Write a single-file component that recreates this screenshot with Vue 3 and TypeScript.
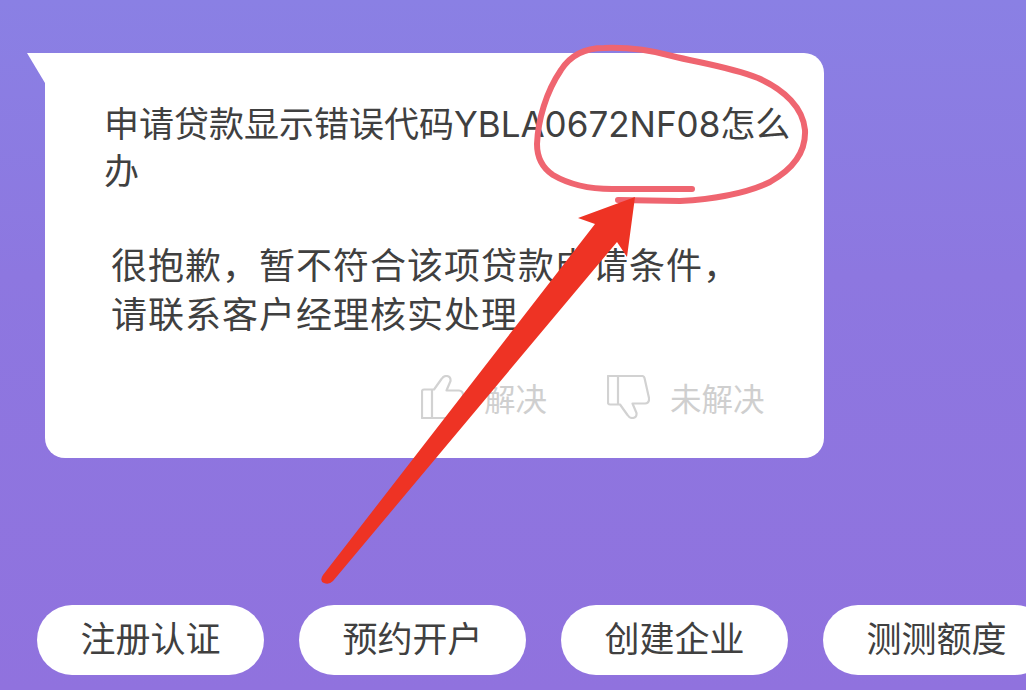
<script setup lang="ts">
const chips: string[] = ['注册认证', '预约开户', '创建企业', '测测额度']
const handPath = 'M1 1H35Q37 1 37.500 3L42 23Q42.500 28 38 28.500H25.500L29.500 38Q30 43 25 43Q22.500 43 20.500 40L13 29.500H3Q1 29.500 1 27.500ZM11 1V29.500'
</script>

<template>
  <div class="page">
    <section class="bubble">
      <p class="question">申请贷款显示错误代码YBLA0672NF08怎么办</p>
      <p class="answer">很抱歉，暂不符合该项贷款申请条件，<br />请联系客户经理核实处理</p>
      <div class="feedback">
        <div class="vote up">
          <svg class="hand" viewBox="0 0 43 44" width="43" height="44" aria-hidden="true">
            <path :d="handPath" transform="matrix(1 0 0 -1 0 44)" />
          </svg>
          <span>解决</span>
        </div>
        <div class="vote">
          <svg class="hand" viewBox="0 0 43 44" width="43" height="44" aria-hidden="true">
            <path :d="handPath" />
          </svg>
          <span>未解决</span>
        </div>
      </div>
    </section>

    <nav class="chips">
      <button v-for="chip in chips" :key="chip" class="chip" type="button">{{ chip }}</button>
    </nav>

    <svg class="markup" viewBox="0 0 1026 690" width="1026" height="690" aria-hidden="true">
      <path
        class="ring"
        d="M692 189L612 189C590 189 570 185 553 175C541 167 537 156 537 144C538 120 546 92 561 70C570 56 583 48 604 48C630 47 650 50 672 56C700 63 730 67 758 78C785 90 803 108 805 130C806 150 795 168 770 182C745 194 715 199 680 201L618 200"
      />
      <path
        class="arrow"
        d="M635 197L578 218L595 224L323 575Q319 581 324 583Q329 585 333 581L617 242L627 257Z"
      />
    </svg>
  </div>
</template>

<style>
html,
body {
  margin: 0;
  padding: 0;
}
</style>

<style scoped>
.page {
  position: relative;
  width: 1026px;
  height: 690px;
  box-sizing: border-box;
  padding-top: 53px;
  overflow: hidden;
  background: linear-gradient(180deg, #8a80e4 0%, #8d77e0 40%, #9072de 100%);
  font-family: Inter, "Noto Sans CJK SC", "Noto Sans", sans-serif;
}

.bubble {
  position: relative;
  box-sizing: border-box;
  width: 779px;
  height: 405px;
  margin-left: 45px;
  padding: 48px 30px 0 59px;
  background: #fff;
  border-radius: 0 20px 20px 20px;
  color: #404040;
  font-size: 35px;
}

.bubble::before {
  content: "";
  position: absolute;
  top: 0;
  left: -18px;
  width: 18px;
  height: 30px;
  background: #fff;
  clip-path: polygon(0 0, 100% 0, 100% 100%);
}

.question {
  margin: 0;
  line-height: 47px;
}

.answer {
  margin: 47px 0 0 7px;
  font-size: 36px;
  letter-spacing: 1px;
  line-height: 49px;
}

.feedback {
  display: flex;
  gap: 60px;
  margin: 35px 0 0 317px;
  color: #cfcfcf;
  font-size: 31.500px;
}

.vote {
  display: flex;
  align-items: center;
  gap: 20px;
  height: 44px;
}

.hand {
  fill: none;
  stroke: #d2d2d2;
  stroke-width: 2.200;
  stroke-linejoin: round;
}

.chips {
  display: flex;
  gap: 35px;
  margin-top: 147px;
  padding-left: 37px;
}

.chip {
  flex: none;
  width: 227px;
  height: 70px;
  padding: 0 0 2px;
  border: 0;
  border-radius: 35px;
  background: #fff;
  color: #404040;
  font: inherit;
  font-size: 35px;
  line-height: 68px;
}

.markup {
  position: absolute;
  top: 0;
  left: 0;
  pointer-events: none;
}

.ring {
  fill: none;
  stroke: #ef6570;
  stroke-width: 6;
  stroke-linecap: round;
  stroke-linejoin: round;
}

.arrow {
  fill: #ee3324;
}
</style>
